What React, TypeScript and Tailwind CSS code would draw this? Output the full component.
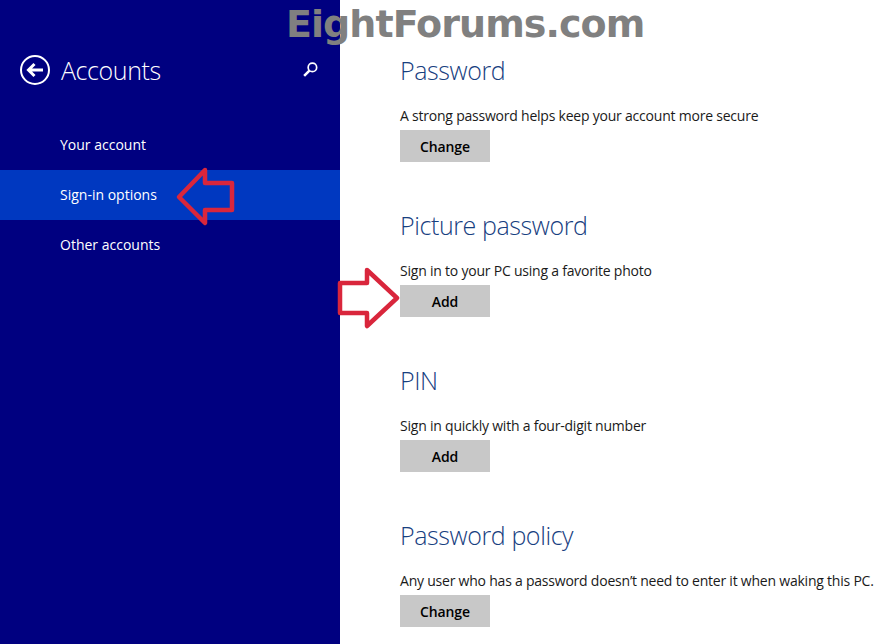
import React from "react";

const font = { fontFamily: '"Open Sans", "Noto Sans", sans-serif' };

const sections = [
  { title: "Password", text: "A strong password helps keep your account more secure", action: "Change" },
  { title: "Picture password", text: "Sign in to your PC using a favorite photo", action: "Add" },
  { title: "PIN", text: "Sign in quickly with a four-digit number", action: "Add" },
  { title: "Password policy", text: "Any user who has a password doesn\u2019t need to enter it when waking this PC.", action: "Change" },
];

const navItems = ["Your account", "Sign-in options", "Other accounts"];

const App: React.FC = () => {
  return (
    <div className="relative flex h-[644px] w-[885px] overflow-hidden bg-white" style={font}>
      <aside className="flex w-[340px] shrink-0 flex-col bg-[#000080] text-white">
        <div className="flex h-[120px] items-start pl-[20px] pr-[21px] pt-[55px]">
          <svg width="30" height="30" viewBox="0 0 30 30" fill="none" stroke="white" className="shrink-0">
            <circle cx="15" cy="15" r="14" strokeWidth="2" />
            <path d="M23 15H9M14.5 9L8.5 15l6 6" strokeWidth="3" />
          </svg>
          <h1 className="ml-[11px] mt-[-3px] text-[25px] font-light leading-[36px] tracking-[-0.4px]">Accounts</h1>
          <svg width="17" height="17" viewBox="0 0 16 16" fill="none" stroke="white" className="ml-auto mt-[6px]">
            <circle cx="9.8" cy="6" r="4" strokeWidth="1.6" />
            <path d="M7 9L2 14" strokeWidth="2.4" />
          </svg>
        </div>
        <nav className="flex flex-col">
          {navItems.map((item) => (
            <div
              key={item}
              className={`flex h-[50px] items-center pb-[2px] pl-[60px] text-[14px] ${item === "Sign-in options" ? "bg-[#0038c0]" : ""}`}
            >
              {item}
            </div>
          ))}
        </nav>
      </aside>

      <main className="flex flex-1 flex-col gap-[30px] pl-[60px] pt-[52px]">
        {sections.map((s) => (
          <section key={s.title} className="flex h-[125px] flex-col items-start">
            <h2 className="h-[36px] whitespace-nowrap text-[25px] font-light leading-[36px] tracking-[-0.4px] text-[#17407f]">{s.title}</h2>
            <p className="mt-[18px] h-[20px] whitespace-nowrap text-[14px] leading-[20px] tracking-[-0.22px] text-[#1a1a1a]">{s.text}</p>
            <button className="mt-[4px] h-[32px] w-[90px] bg-[#c8c8c8] text-[14px] font-semibold tracking-[-0.1px] text-black">
              {s.action}
            </button>
          </section>
        ))}
      </main>

      <div className="absolute left-[286px] top-[0px] whitespace-nowrap text-[38px] font-bold leading-[48px] tracking-[-0.95px] text-[#808080]" style={{ fontFamily: '"DejaVu Sans", sans-serif' }}>
        EightForums.com
      </div>

      <svg className="absolute left-[175px] top-[167px]" width="62" height="60" viewBox="0 0 62 60" fill="none" stroke="#d9263c" strokeWidth="4.5" strokeLinejoin="round">
        <path d="M30 3L4 30L30 56V43H57V16H30Z" />
      </svg>
      <svg className="absolute left-[337px] top-[267px]" width="64" height="62" viewBox="0 0 64 62" fill="none" stroke="#d9263c" strokeWidth="4.5" strokeLinejoin="round">
        <path d="M3 16H30V3L60 31L30 59V46H3Z" />
      </svg>
    </div>
  );
};

export default App;
